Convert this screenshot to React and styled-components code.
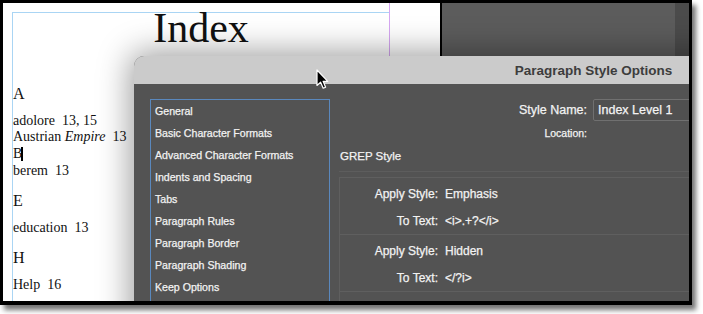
import React from "react";
import styled, { createGlobalStyle } from "styled-components";

const Global = createGlobalStyle`
  html, body { margin: 0; padding: 0; background: #ffffff; }
  #root { width: 703px; height: 314px; }
`;

const Frame = styled.div`
  width: 686px;
  height: 298px;
  border: 3px solid #000;
  border-bottom-width: 4px;
  box-shadow: 4px 5px 5px rgba(0, 0, 0, 0.55);
`;

const Canvas = styled.div`
  position: relative;
  width: 100%;
  height: 100%;
  overflow: hidden;
  display: flex;
`;

const Page = styled.div`
  width: 437px;
  flex: none;
  background: #ffffff;
  display: flex;
`;

const MarginArea = styled.div`
  margin: 9px 0 0 9px;
  width: 376px;
  border-top: 1px solid #aad5f4;
  border-left: 1px solid #aad5f4;
  font-family: "Liberation Serif", "Times New Roman", serif;
  color: #111;
`;

const ColumnGuide = styled.div`
  width: 1px;
  background: #d6a7f2;
`;

const Title = styled.h1`
  margin: 0 0 42px;
  font-weight: normal;
  font-size: 42px;
  line-height: 31px;
  text-align: center;
`;

const Letter = styled.div`
  font-size: 16px;
  line-height: 16px;
  margin: 14px 0 11px;
`;

const Entry = styled.div`
  font-size: 14px;
  line-height: ${(p) => p.$lh || 16}px;
  white-space: pre;
`;

const Caret = styled.span`
  display: inline-block;
  width: 2px;
  height: 14px;
  background: #000;
  vertical-align: -3px;
  margin-left: -1px;
`;

const PageEdge = styled.div`
  width: 2px;
  flex: none;
  background: #000;
`;

const Pasteboard = styled.div`
  flex: 1;
  display: flex;
  justify-content: flex-end;
  background: #5c5c5c;
`;

const PasteStrip = styled.div`
  width: 14px;
  background: #4b4b4b;
`;

const Dialog = styled.div`
  position: absolute;
  left: 131px;
  top: 53px;
  width: 919px;
  height: 320px;
  border-radius: 10px 10px 0 0;
  background: #535353;
  box-shadow: 0 0 32px 4px rgba(0, 0, 0, 0.38);
  font-family: "Liberation Sans", Arial, sans-serif;
  overflow: hidden;
`;

const TitleBar = styled.div`
  height: 28px;
  background: #cbcbcb;
  display: flex;
  align-items: center;
  justify-content: center;
  font-weight: bold;
  font-size: 13.5px;
  color: #3d3d3d;
`;

const Body = styled.div`
  display: flex;
  align-items: flex-start;
  padding: 15px 0 0 16px;
  -webkit-text-stroke: 0.25px currentColor;
`;

const Sidebar = styled.ul`
  list-style: none;
  margin: 0;
  padding: 0 0 40px 4px;
  width: 174px;
  border: 1px solid #5a88bd;
`;

const SideItem = styled.li`
  font-size: 10.6px;
  line-height: 22px;
  color: #f2f2f2;
  white-space: nowrap;
`;

const Main = styled.div`
  margin-left: 9px;
  width: 420px;
  color: #f2f2f2;
`;

const FieldRow = styled.div`
  display: grid;
  grid-template-columns: 248px 1fr;
  column-gap: 6px;
  align-items: center;
  margin-top: ${(p) => p.$mt || 0}px;
  min-height: 22px;
`;

const FieldLabel = styled.div`
  text-align: right;
  font-size: ${(p) => p.$size || 12.5}px;
  white-space: nowrap;
`;

const TextField = styled.div`
  height: 20px;
  border: 1px solid #707070;
  border-radius: 2px;
  background: #505050;
  padding-left: 4px;
  font-size: 12.5px;
  line-height: 20px;
  color: #f4f4f4;
  white-space: nowrap;
`;

const SectionTitle = styled.div`
  margin-top: 1px;
  padding-left: 1px;
  font-size: 11.5px;
  line-height: 22px;
`;

const Divider = styled.div`
  margin-top: 4px;
  height: 1px;
  background: #5d5d5d;
`;

const GrepList = styled.div`
  margin-top: 5px;
  border-top: 1px solid #5f5f5f;
  border-left: 1px solid #5f5f5f;
`;

const GrepRule = styled.div`
  padding-top: 2px;
  border-bottom: 1px solid #5f5f5f;
`;

const GrepLine = styled.div`
  display: grid;
  grid-template-columns: 98px auto;
  column-gap: 7px;
  height: 27px;
  align-items: center;
  font-size: 12px;
  white-space: nowrap;
`;

const GrepLabel = styled.span`
  text-align: right;
`;

const Pointer = styled.svg`
  position: absolute;
  left: 313px;
  top: 66px;
  width: 13px;
  height: 21px;
`;

const sections = [
  "General",
  "Basic Character Formats",
  "Advanced Character Formats",
  "Indents and Spacing",
  "Tabs",
  "Paragraph Rules",
  "Paragraph Border",
  "Paragraph Shading",
  "Keep Options",
];

const grepRules = [
  { style: "Emphasis", text: "<i>.+?</i>" },
  { style: "Hidden", text: "</?i>" },
  { style: "", text: "" },
];

export default function App() {
  return (
    <>
      <Global />
      <Frame>
        <Canvas>
          <Page>
            <MarginArea>
              <Title>Index</Title>
              <Letter>A</Letter>
              <Entry>adolore{"\u2002"}13, 15</Entry>
              <Entry>
                Austrian <i>Empire</i>
                {"\u2002"}13
              </Entry>
              <Entry $lh={18}>
                B<Caret />
              </Entry>
              <Entry>berem{"\u2002"}13</Entry>
              <Letter>E</Letter>
              <Entry>education{"\u2002"}13</Entry>
              <Letter>H</Letter>
              <Entry>Help{"\u2002"}16</Entry>
            </MarginArea>
            <ColumnGuide />
          </Page>
          <PageEdge />
          <Pasteboard>
            <PasteStrip />
          </Pasteboard>

          <Dialog>
            <TitleBar>Paragraph Style Options</TitleBar>
            <Body>
              <Sidebar>
                {sections.map((s) => (
                  <SideItem key={s}>{s}</SideItem>
                ))}
              </Sidebar>
              <Main>
                <FieldRow>
                  <FieldLabel>Style Name:</FieldLabel>
                  <TextField>Index Level 1</TextField>
                </FieldRow>
                <FieldRow $mt={1}>
                  <FieldLabel $size={10.5}>Location:</FieldLabel>
                  <span />
                </FieldRow>
                <SectionTitle>GREP Style</SectionTitle>
                <Divider />
                <GrepList>
                  {grepRules.map((r, i) => (
                    <GrepRule key={i}>
                      <GrepLine>
                        <GrepLabel>{r.style ? "Apply Style:" : ""}</GrepLabel>
                        <span>{r.style}</span>
                      </GrepLine>
                      <GrepLine>
                        <GrepLabel>{r.style ? "To Text:" : ""}</GrepLabel>
                        <span>{r.text}</span>
                      </GrepLine>
                    </GrepRule>
                  ))}
                </GrepList>
              </Main>
            </Body>
          </Dialog>

          <Pointer viewBox="0 0 13 21">
            <path
              d="M1 1 L1 16.5 L4.6 13.2 L7.2 19.2 L9.6 18.2 L7.1 12.3 L11.8 12.3 Z"
              fill="#000"
              stroke="#fff"
              strokeWidth="1.2"
              strokeLinejoin="round"
            />
          </Pointer>
        </Canvas>
      </Frame>
    </>
  );
}
